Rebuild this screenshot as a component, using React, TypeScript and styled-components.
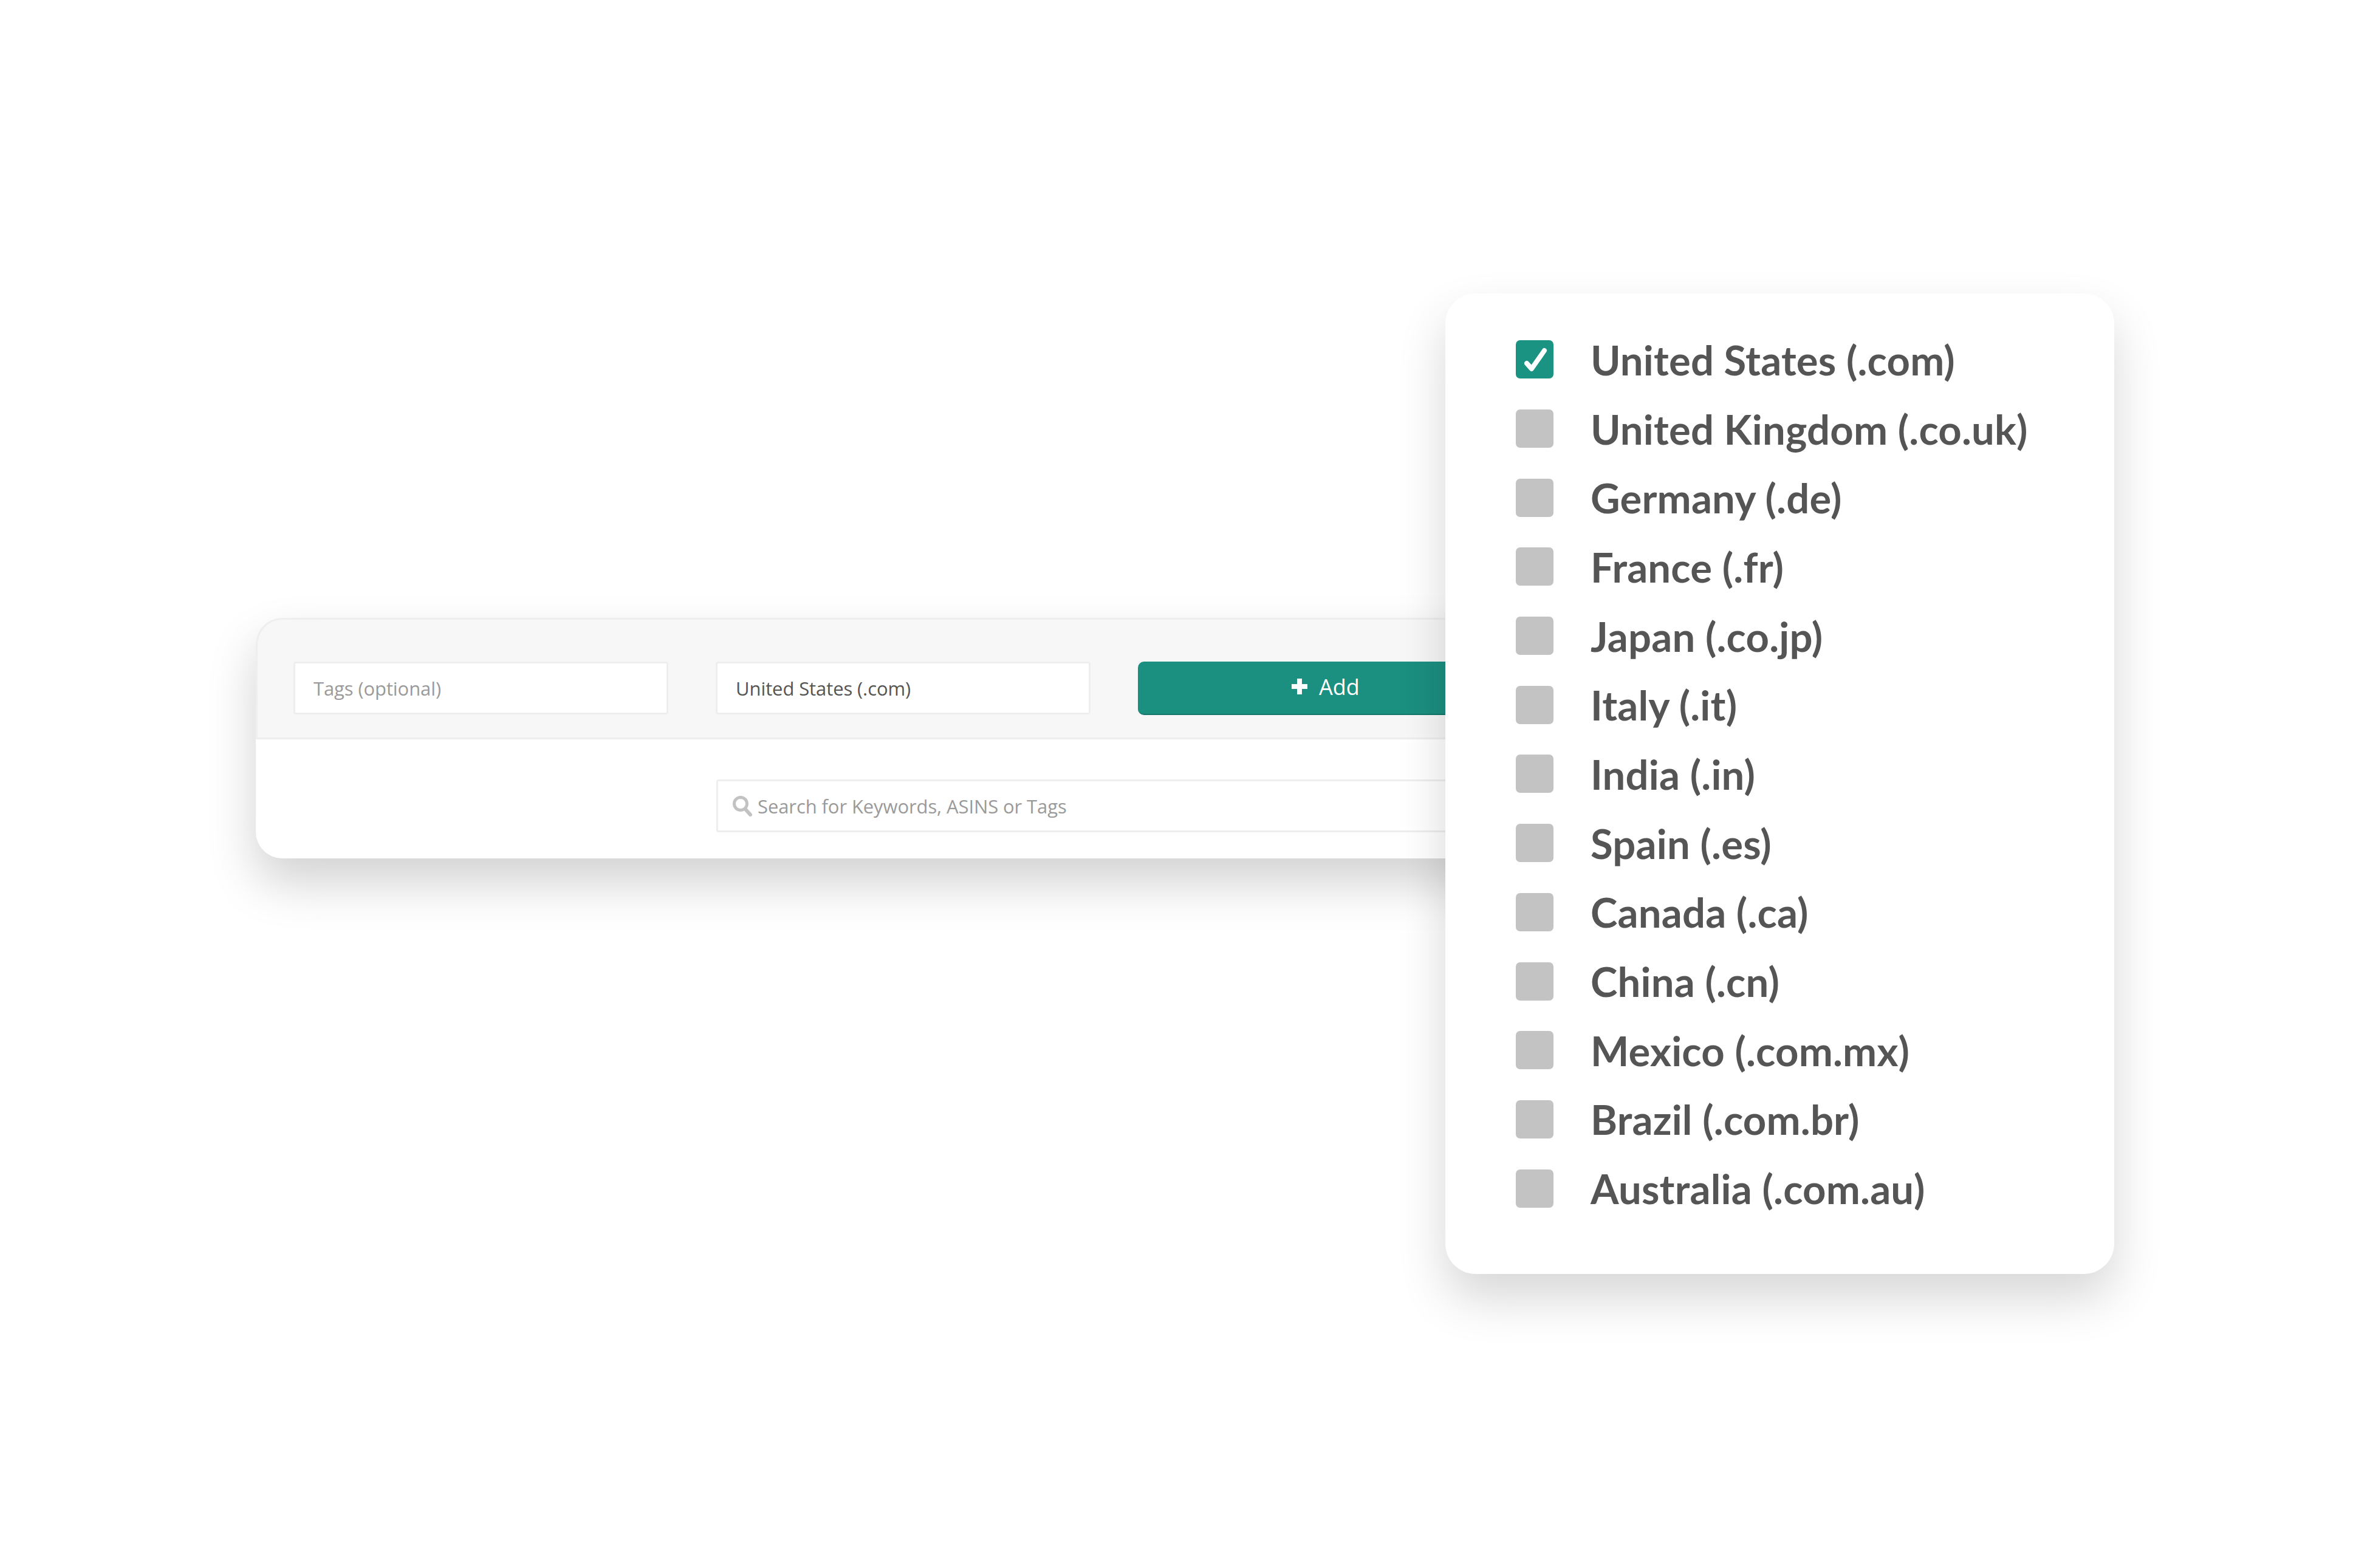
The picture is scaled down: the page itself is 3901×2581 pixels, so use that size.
import React from "react";
import styled, { createGlobalStyle } from "styled-components";

const Global = createGlobalStyle`
  html, body { margin: 0; padding: 0; background: #fff; }
`;

const Page = styled.main`
  position: relative;
  box-sizing: border-box;
  width: 3901px;
  height: 2581px;
  padding: 1017px 0 0 421px;
  background: #fff;
  overflow: hidden;
  font-family: "Open Sans", sans-serif;
`;

const Card = styled.section`
  width: 2500px;
  height: 396px;
  display: flex;
  flex-direction: column;
  background: #fff;
  border-radius: 44px;
  box-shadow: 0 40px 80px rgba(0, 0, 0, 0.18);
`;

const Toolbar = styled.div`
  box-sizing: border-box;
  height: 200px;
  padding: 69px 0 0 59px;
  display: flex;
  gap: 78px;
  background: #f7f7f7;
  border-top: 3px solid #eeeeee;
  border-bottom: 3px solid #eeeeee;
  border-left: 3px solid #eeeeee;
  border-radius: 44px 44px 0 0;
`;

const Field = styled.div<{ $muted?: boolean; $wide?: boolean }>`
  box-sizing: border-box;
  width: ${(p) => (p.$wide ? "1500px" : "617px")};
  height: 87px;
  display: flex;
  align-items: center;
  gap: 9px;
  padding: 1px 0 0 ${(p) => (p.$wide ? "24px" : "30px")};
  background: #fff;
  border: 3px solid #eeeeee;
  border-radius: 4px;
  color: ${(p) => (p.$muted ? "#9a9a9a" : "#555555")};
  font-size: 31px;
  letter-spacing: -0.1px;
  white-space: nowrap;
`;

const AddButton = styled.button`
  width: 617px;
  height: 88px;
  display: flex;
  align-items: center;
  justify-content: center;
  gap: 18px;
  padding: 0 0 4px;
  background: #1b8f80;
  border: 0;
  border-bottom: 2px solid #14776a;
  border-radius: 10px;
  color: #fff;
  font-family: inherit;
  font-size: 36px;
`;

const SearchRow = styled.div`
  padding: 66px 0 0 758px;
`;

const Panel = styled.aside`
  position: absolute;
  left: 2379px;
  top: 483px;
  box-sizing: border-box;
  width: 1101px;
  height: 1614px;
  padding: 52px 0 0 116px;
  background: #fff;
  border-radius: 50px;
  box-shadow: 0 40px 80px rgba(0, 0, 0, 0.16);
`;

const Market = styled.label`
  height: 113.7px;
  display: flex;
  align-items: center;
  gap: 61px;
  color: #555555;
  font-family: "Lato", sans-serif;
  font-size: 67px;
  font-weight: 700;
  letter-spacing: 0.2px;
  white-space: nowrap;
`;

const Box = styled.span<{ $checked?: boolean }>`
  flex: none;
  width: 62px;
  height: 63px;
  display: flex;
  border-radius: 7px;
  background: ${(p) => (p.$checked ? "#1a9383" : "#c3c3c3")};
`;

const markets = [
  "United States (.com)",
  "United Kingdom (.co.uk)",
  "Germany (.de)",
  "France (.fr)",
  "Japan (.co.jp)",
  "Italy (.it)",
  "India (.in)",
  "Spain (.es)",
  "Canada (.ca)",
  "China (.cn)",
  "Mexico (.com.mx)",
  "Brazil (.com.br)",
  "Australia (.com.au)",
];

export default function App() {
  return (
    <Page>
      <Global />
      <Card>
        <Toolbar>
          <Field $muted>Tags (optional)</Field>
          <Field>United States (.com)</Field>
          <AddButton>
            <svg width="28" height="28" viewBox="0 0 28 28" aria-hidden="true">
              <path d="M14 1v26M1 14h26" stroke="#fff" strokeWidth="8" strokeLinecap="butt" />
            </svg>
            Add
          </AddButton>
        </Toolbar>
        <SearchRow>
          <Field $muted $wide>
            <svg width="32" height="34" viewBox="0 0 32 34" aria-hidden="true">
              <circle cx="13" cy="13" r="10.5" fill="none" stroke="#c2c2c2" strokeWidth="5" />
              <path d="M21 22l8 9" stroke="#c2c2c2" strokeWidth="6" strokeLinecap="round" />
            </svg>
            Search for Keywords, ASINS or Tags
          </Field>
        </SearchRow>
      </Card>
      <Panel>
        {markets.map((name, i) => (
          <Market key={name}>
            <Box $checked={i === 0}>
              {i === 0 && (
                <svg width="62" height="63" viewBox="0 0 62 63" aria-hidden="true">
                  <path
                    d="M18 38l8 9L47 17"
                    fill="none"
                    stroke="#fff"
                    strokeWidth="8"
                    strokeLinecap="round"
                    strokeLinejoin="round"
                  />
                </svg>
              )}
            </Box>
            {name}
          </Market>
        ))}
      </Panel>
    </Page>
  );
}
